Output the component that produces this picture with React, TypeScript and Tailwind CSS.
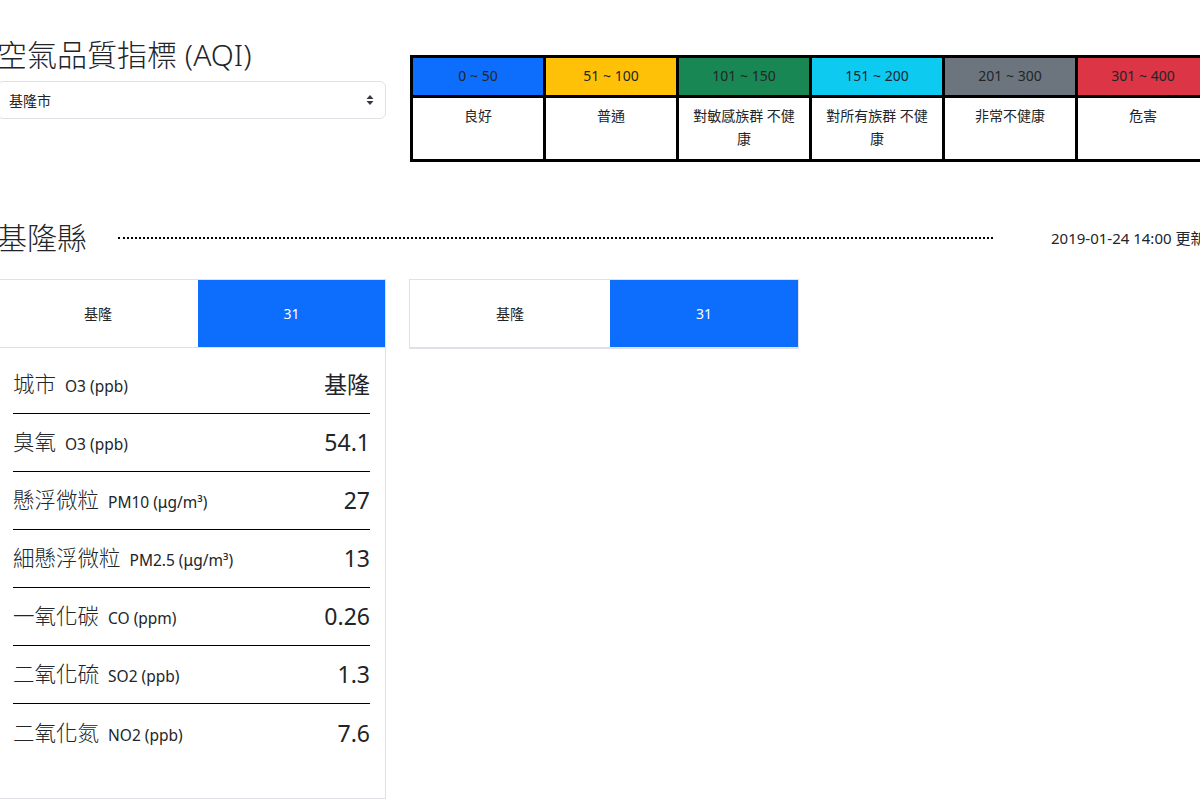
import React from "react";

const levels = [
  { range: "0 ~ 50", label: "良好", bg: "bg-[#0d6efd]" },
  { range: "51 ~ 100", label: "普通", bg: "bg-[#ffc107]" },
  { range: "101 ~ 150", label: "對敏感族群 不健康", bg: "bg-[#198754]" },
  { range: "151 ~ 200", label: "對所有族群 不健康", bg: "bg-[#0dcaf0]" },
  { range: "201 ~ 300", label: "非常不健康", bg: "bg-[#6c757d]" },
  { range: "301 ~ 400", label: "危害", bg: "bg-[#dc3545]" },
];

const rows = [
  { name: "城市", unit: "O3 (ppb)", value: "基隆" },
  { name: "臭氧", unit: "O3 (ppb)", value: "54.1" },
  { name: "懸浮微粒", unit: "PM10 (μg/m³)", value: "27" },
  { name: "細懸浮微粒", unit: "PM2.5 (μg/m³)", value: "13" },
  { name: "一氧化碳", unit: "CO (ppm)", value: "0.26" },
  { name: "二氧化硫", unit: "SO2 (ppb)", value: "1.3" },
  { name: "二氧化氮", unit: "NO2 (ppb)", value: "7.6" },
];

const SiteHead = () => (
  <div className="flex h-[68px] border-b border-[#dee2e6] text-[14px]">
    <div className="w-[200px] flex items-center justify-center">基隆</div>
    <div className="flex-1 flex items-center justify-center bg-[#0d6efd] text-white">
      31
    </div>
  </div>
);

const App = () => {
  return (
    <div
      className="w-[1200px] h-[800px] overflow-hidden bg-white text-[#212529]"
      style={{ fontFamily: '"Noto Sans", "Noto Sans CJK TC", sans-serif' }}
    >
      <div className="ml-[-3px] w-[1214px]">
        {/* Top: title, select and AQI legend */}
        <div className="flex gap-[24px] h-[160px]">
          <div className="w-[389px] pt-[37px]">
            <h3 className="text-[30px] leading-[35px] font-light">空氣品質指標 (AQI)</h3>
            <div className="mt-[9px] h-[38px] border border-[#dee2e6] rounded-[6px] flex items-center justify-between pl-[11px] pr-[11px] text-[14px]">
              <span>基隆市</span>
              <svg width="8" height="12" viewBox="0 0 8 12" className="text-[#343a40]">
                <path d="M4 1 L7.5 5 H0.5 Z" fill="currentColor" />
                <path d="M4 11 L7.5 7 H0.5 Z" fill="currentColor" />
              </svg>
            </div>
          </div>
          <div className="pt-[55px]">
            <table className="table-fixed w-[801px] border-collapse border-[3px] border-black text-[14px] leading-[23px] text-center">
              <tbody>
                <tr>
                  {levels.map((l) => (
                    <td
                      key={l.range}
                      className={`${l.bg} border-[3px] border-black px-[10px] pt-[6px] pb-[8px] text-[#212529]`}
                    >
                      {l.range}
                    </td>
                  ))}
                </tr>
                <tr>
                  {levels.map((l) => (
                    <td
                      key={l.range}
                      className="border-[3px] border-black px-[10px] pt-[6px] pb-[9px] h-[64px] align-top"
                    >
                      {l.label}
                    </td>
                  ))}
                </tr>
              </tbody>
            </table>
          </div>
        </div>

        {/* County heading */}
        <div className="mt-[61px] h-[34px] flex items-center whitespace-nowrap">
          <h3 className="text-[30px] leading-[34px] font-light shrink-0">基隆縣</h3>
          <div className="ml-[31px] w-[875px] shrink-0 border-t-2 border-dotted border-black" />
          <span className="ml-[58px] text-[15px] shrink-0">2019-01-24 14:00 更新</span>
        </div>

        {/* Sites */}
        <div className="mt-[24px] flex items-start gap-[23px]">
          <div className="w-[389px] border border-[#dee2e6]">
            <SiteHead />
            <div className="px-[15px] pt-[8px] pb-[36px]">
              {rows.map((r, i) => (
                <div
                  key={r.name}
                  className={`h-[58px] flex items-center justify-between ${
                    i < rows.length - 1 ? "border-b border-black" : ""
                  }`}
                >
                  <div className="flex items-baseline">
                    <span className="text-[21.5px] font-light">{r.name}</span>
                    <span className="ml-[9px] text-[15.5px]">{r.unit}</span>
                  </div>
                  <span className="text-[23px]">{r.value}</span>
                </div>
              ))}
            </div>
          </div>
          <div className="w-[390px] border border-[#dee2e6]">
            <SiteHead />
          </div>
        </div>
      </div>
    </div>
  );
};

export default App;
